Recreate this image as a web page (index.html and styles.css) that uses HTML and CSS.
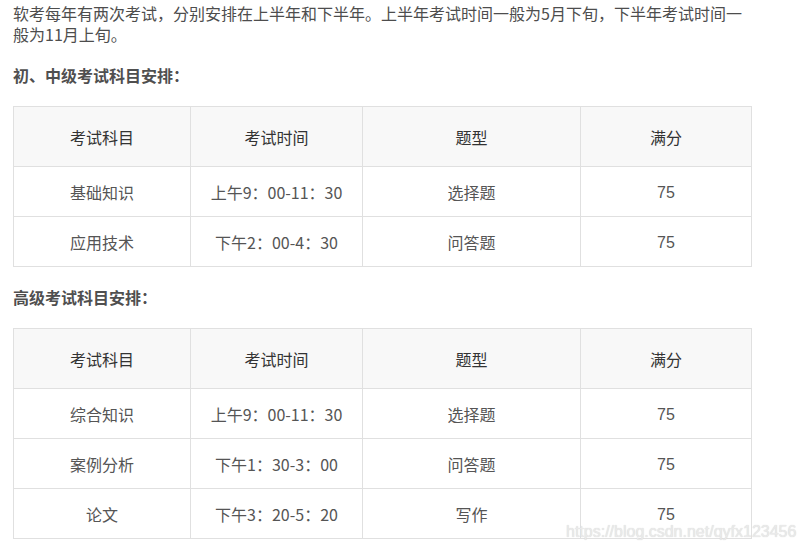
FILE: index.html
```html
<!DOCTYPE html>
<html lang="zh-CN">
<head>
<meta charset="utf-8">
<link rel="stylesheet" href="styles.css">
</head>
<body>
<div class="article">
  <p class="intro">软考每年有两次考试，分别安排在上半年和下半年。上半年考试时间一般为5月下旬，下半年考试时间一般为11月上旬。</p>
  <h4 class="sub">初、中级考试科目安排：</h4>
  <table class="grid">
    <colgroup><col class="c1"><col class="c2"><col class="c3"><col class="c4"></colgroup>
    <thead><tr><th>考试科目</th><th>考试时间</th><th>题型</th><th>满分</th></tr></thead>
    <tbody>
      <tr><td>基础知识</td><td>上午9：00-11：30</td><td>选择题</td><td class="score">75</td></tr>
      <tr><td>应用技术</td><td>下午2：00-4：30</td><td>问答题</td><td class="score">75</td></tr>
    </tbody>
  </table>
  <h4 class="sub">高级考试科目安排：</h4>
  <table class="grid">
    <colgroup><col class="c1"><col class="c2"><col class="c3"><col class="c4"></colgroup>
    <thead><tr><th>考试科目</th><th>考试时间</th><th>题型</th><th>满分</th></tr></thead>
    <tbody>
      <tr><td>综合知识</td><td>上午9：00-11：30</td><td>选择题</td><td class="score">75</td></tr>
      <tr><td>案例分析</td><td>下午1：30-3：00</td><td>问答题</td><td class="score">75</td></tr>
      <tr><td>论文</td><td>下午3：20-5：20</td><td>写作</td><td class="score">75</td></tr>
    </tbody>
  </table>
</div>
<div class="watermark">https://blog.csdn.net/qyfx123456</div>
</body>
</html>
```
FILE: styles.css
```css
html, body {
  margin: 0;
  padding: 0;
  background: #fff;
}
body {
  position: relative;
  width: 803px;
  height: 550px;
  overflow: hidden;
  font-family: "Noto Sans CJK SC", "Noto Sans", sans-serif;
  font-size: 16px;
  color: #4d4d4d;
}
.article {
  padding: 3px 13px 0 13px;
}
.intro {
  margin: 0 0 20px 0;
  width: 740px;
  line-height: 21px;
  color: #4d4d4d;
}
.sub {
  margin: 0 0 20px 0;
  font-size: 16px;
  line-height: 21px;
  font-weight: bold;
  color: #4f4f4f;
}
.grid {
  border-collapse: collapse;
  width: 739px;
  table-layout: fixed;
  margin: 0 0 20px 0;
}
.grid .c1 { width: 177px; }
.grid .c2 { width: 172px; }
.grid .c3 { width: 218px; }
.grid .c4 { width: 171px; }
.grid th, .grid td {
  border: 1px solid #e0e0e0;
  text-align: center;
  padding: 0;
  font-size: 16px;
  line-height: 20px;
}
.grid th {
  height: 59px;
  background: #f8f8f8;
  font-weight: normal;
  color: #333;
}
.grid td {
  height: 49px;
  color: #555;
}
.grid td.score {
  padding-top: 2px;
  height: 47px;
  font-family: "Liberation Sans", "Noto Sans CJK SC", sans-serif;
}
.watermark {
  position: absolute;
  left: 566px;
  top: 525px;
  line-height: 14px;
  font-family: "Liberation Sans", Arial, sans-serif;
  font-size: 16px;
  color: #eaeaea;
  text-shadow: 0 0 1px #cfcfcf;
  white-space: nowrap;
}
```
